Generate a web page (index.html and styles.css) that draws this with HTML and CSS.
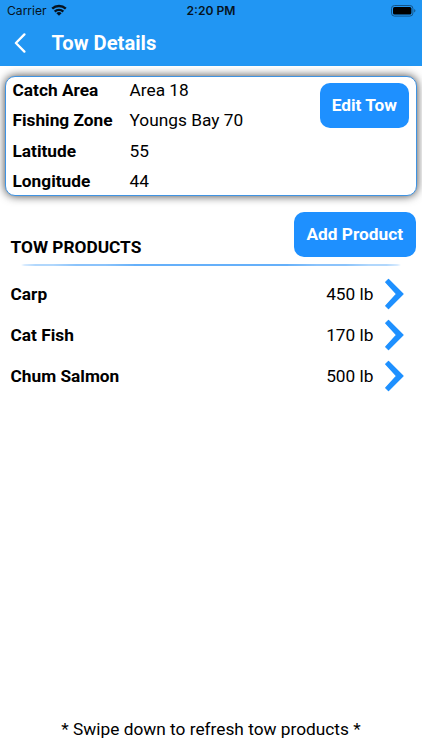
FILE: index.html
```html
<!DOCTYPE html>
<html lang="en">
<head>
<meta charset="utf-8">
<title>Tow Details</title>
<link rel="stylesheet" href="styles.css">
</head>
<body>
<header class="top">
  <div class="status">
    <div class="carrier"><span>Carrier</span>
      <svg class="wifi" viewBox="0 0 16 12"><g fill="none" stroke="#061320" stroke-width="2.4"><path d="M1.2 4.7a9.8 9.8 0 0 1 13.6 0"/><path d="M3.7 7.6a6.1 6.1 0 0 1 8.6 0"/></g><path d="M8 11.8 5.4 9.2a3.8 3.8 0 0 1 5.2 0z" fill="#061320"/></svg>
    </div>
    <div class="time">2:20 PM</div>
    <div class="power"><svg class="battery" viewBox="0 0 25 12"><rect x=".5" y=".5" width="21.4" height="10.6" rx="3" fill="none" stroke="#145488"/><rect x="2" y="2" width="18.4" height="7.6" rx="1.6" fill="#000"/><path d="M23.2 4v3.6q1.2-.6 1.2-1.8T23.2 4z" fill="#145488"/></svg></div>
  </div>
  <div class="nav">
    <svg class="back" viewBox="0 0 12 20"><path d="M10.4 1.4 1.9 10l8.5 8.6" fill="none" stroke="#fff" stroke-width="2.3" stroke-linecap="round" stroke-linejoin="round"/></svg>
    <h1>Tow Details</h1>
  </div>
</header>
<main>
  <section class="card">
    <dl class="facts">
      <dt>Catch Area</dt><dd>Area 18</dd>
      <dt>Fishing Zone</dt><dd>Youngs Bay 70</dd>
      <dt>Latitude</dt><dd>55</dd>
      <dt>Longitude</dt><dd>44</dd>
    </dl>
    <button class="btn edit">Edit Tow</button>
  </section>
  <div class="heading">
    <h2>TOW PRODUCTS</h2>
    <button class="btn add">Add Product</button>
  </div>
  <div class="rule"></div>
  <ul class="products">
    <li><b>Carp</b><span>450 lb</span><svg class="chev" viewBox="0 0 20 32"><path d="M3.5 1.4 18 16 3.5 30.6.7 27.8 11.6 16 .7 4.2z"/></svg></li>
    <li><b>Cat Fish</b><span>170 lb</span><svg class="chev" viewBox="0 0 20 32"><path d="M3.5 1.4 18 16 3.5 30.6.7 27.8 11.6 16 .7 4.2z"/></svg></li>
    <li><b>Chum Salmon</b><span>500 lb</span><svg class="chev" viewBox="0 0 20 32"><path d="M3.5 1.4 18 16 3.5 30.6.7 27.8 11.6 16 .7 4.2z"/></svg></li>
  </ul>
</main>
<footer>* Swipe down to refresh tow products *</footer>
</body>
</html>
```
FILE: styles.css
```css
* { box-sizing: border-box; margin: 0; padding: 0; }
body {
  height: 750px;
  display: flex;
  flex-direction: column;
  overflow: hidden;
  background: #fff;
  color: #000;
  font: 17.3px/20px Roboto, sans-serif;
}
.top { height: 65.6px; flex: none; background: #2196f3; }
.status {
  height: 21px;
  padding: 0 6px 0 7px;
  display: grid;
  grid-template-columns: 1fr auto 1fr;
  align-items: center;
  color: #061320;
  font: 12.1px/21px Inter, sans-serif;
}
.carrier { display: flex; align-items: center; gap: 4px; }
.wifi { width: 16px; height: 12px; margin-top: -2px; }
.time { font-weight: 600; padding-right: 1px; }
.power { display: flex; justify-content: flex-end; }
.battery { width: 25px; height: 12px; }
.nav { display: flex; align-items: center; height: 44px; padding-left: 13.5px; }
.back { width: 12px; height: 20px; }
h1 { margin-left: 26px; font-size: 20.2px; line-height: 24px; font-weight: 700; color: #fff; }
main { flex: 1; }
.card {
  display: flex;
  justify-content: space-between;
  align-items: flex-start;
  margin: 10px 5px 0;
  height: 120px;
  padding: 0 7px 0 6.5px;
  border: 1px solid #3f93e2;
  border-radius: 10px;
  background: #fff;
  box-shadow: 0 0 10px rgba(0, 0, 0, .75);
}
.facts { display: grid; grid-template-columns: 117px auto; grid-auto-rows: 30.6px; margin-top: -2px; line-height: 30.6px; }
dt { font-weight: 700; }
.btn {
  height: 45px;
  padding-bottom: 1px;
  border: 0;
  border-radius: 10px;
  background: #1e90ff;
  color: #fff;
  font: 700 17.3px/20px Roboto, sans-serif;
}
.edit { width: 89.5px; margin-top: 6.3px; }
.add { width: 121.5px; padding-bottom: 0; }
.heading { display: flex; justify-content: space-between; align-items: flex-start; margin-top: 16px; padding: 0 6.5px 0 10.5px; }
h2 { margin-top: 25px; font-size: 17.3px; line-height: 20px; font-weight: 700; }
.rule { height: 2px; margin: 7.2px 21px 0; border-radius: 50%; background: #65b0fa; }
.products { list-style: none; margin-top: 8px; padding: 0 17px 0 10.5px; }
li { display: flex; align-items: center; height: 40.75px; }
li b { flex: 1; }
.chev { width: 20px; height: 32px; margin-left: 11.5px; fill: #1e90ff; stroke: #1e90ff; stroke-width: 1.2; stroke-linejoin: round; }
footer { height: 31px; text-align: center; }
```
